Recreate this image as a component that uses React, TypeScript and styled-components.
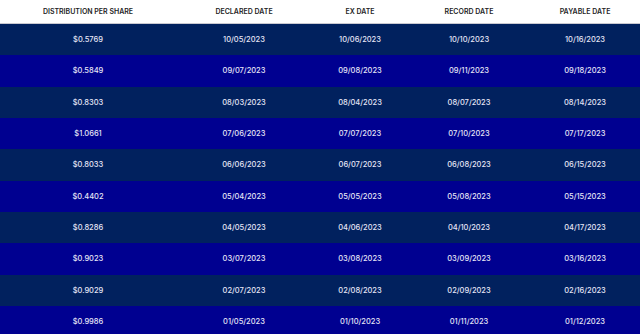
import styled, { createGlobalStyle } from "styled-components";

interface IDistribution {
  amount: string;
  declared: string;
  ex: string;
  record: string;
  payable: string;
}

const distributions: IDistribution[] = [
  { amount: "$0.5769", declared: "10/05/2023", ex: "10/06/2023", record: "10/10/2023", payable: "10/16/2023" },
  { amount: "$0.5849", declared: "09/07/2023", ex: "09/08/2023", record: "09/11/2023", payable: "09/18/2023" },
  { amount: "$0.8303", declared: "08/03/2023", ex: "08/04/2023", record: "08/07/2023", payable: "08/14/2023" },
  { amount: "$1.0661", declared: "07/06/2023", ex: "07/07/2023", record: "07/10/2023", payable: "07/17/2023" },
  { amount: "$0.8033", declared: "06/06/2023", ex: "06/07/2023", record: "06/08/2023", payable: "06/15/2023" },
  { amount: "$0.4402", declared: "05/04/2023", ex: "05/05/2023", record: "05/08/2023", payable: "05/15/2023" },
  { amount: "$0.8286", declared: "04/05/2023", ex: "04/06/2023", record: "04/10/2023", payable: "04/17/2023" },
  { amount: "$0.9023", declared: "03/07/2023", ex: "03/08/2023", record: "03/09/2023", payable: "03/16/2023" },
  { amount: "$0.9029", declared: "02/07/2023", ex: "02/08/2023", record: "02/09/2023", payable: "02/16/2023" },
  { amount: "$0.9986", declared: "01/05/2023", ex: "01/10/2023", record: "01/11/2023", payable: "01/12/2023" },
];

const columns = [
  { label: "Distribution per share", width: 176 },
  { label: "Declared date", width: 136 },
  { label: "Ex date", width: 96 },
  { label: "Record date", width: 122 },
  { label: "Payable date", width: 110 },
];

const App = () => {
  return (
    <>
      <GlobalStyle />
      <Table>
        <colgroup>
          {columns.map((col) => (
            <col key={col.label} style={{ width: col.width }} />
          ))}
        </colgroup>
        <thead>
          <tr>
            {columns.map((col) => (
              <HeadCell key={col.label}>{col.label}</HeadCell>
            ))}
          </tr>
        </thead>
        <tbody>
          {distributions.map((item, i) => (
            <Row key={item.declared} $striped={i % 2 === 1}>
              <Cell>{item.amount}</Cell>
              <Cell>{item.declared}</Cell>
              <Cell>{item.ex}</Cell>
              <Cell>{item.record}</Cell>
              <Cell>{item.payable}</Cell>
            </Row>
          ))}
        </tbody>
      </Table>
    </>
  );
};

const GlobalStyle = createGlobalStyle`
  html, body {
    margin: 0;
    padding: 0;
    background: #ffffff;
    font-family: Inter, "Liberation Sans", sans-serif;
  }
  body {
    width: 640px;
    height: 334px;
    overflow: hidden;
  }
`;

const Table = styled.table`
  width: 640px;
  table-layout: fixed;
  border-collapse: separate;
  border-spacing: 0;
`;

const HeadCell = styled.th`
  height: 24px;
  box-sizing: border-box;
  padding: 0 0 1px 0;
  text-align: center;
  text-transform: uppercase;
  font-size: 7px;
  font-weight: 600;
  color: #1f1f1f;
  background: #ffffff;
  border-bottom: 1px solid #c9c9d1;
`;

const Row = styled.tr<{ $striped: boolean }>`
  background: ${({ $striped }) => ($striped ? "#000090" : "#01215e")};

  & + & td {
    border-top: 1px solid #1a2568;
  }
`;

const Cell = styled.td`
  height: 31.33px;
  box-sizing: border-box;
  padding: 0;
  text-align: center;
  font-size: 7.5px;
  font-weight: 500;
  color: #e6e6f6;
`;

export default App;
